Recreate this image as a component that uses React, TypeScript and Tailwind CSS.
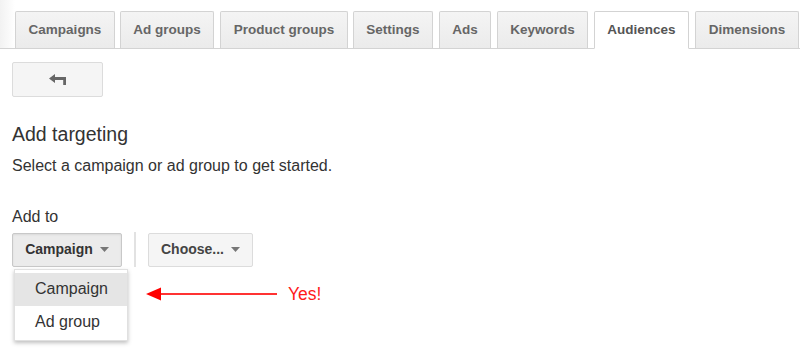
import React from "react";

const tabs = [
  { label: "Campaigns", w: "w-[100px]", ml: "ml-[15px]" },
  { label: "Ad groups", w: "w-[94px]", ml: "ml-[5px]" },
  { label: "Product groups", w: "w-[128px]", ml: "ml-[6px]" },
  { label: "Settings", w: "w-[80px]", ml: "ml-[5px]" },
  { label: "Ads", w: "w-[52px]", ml: "ml-[6px]" },
  { label: "Keywords", w: "w-[91px]", ml: "ml-[6px]" },
  { label: "Audiences", w: "w-[95px]", ml: "ml-[6px]", active: true },
  { label: "Dimensions", w: "w-[104px]", ml: "ml-[6px]" },
];

function Caret() {
  return (
    <svg width="9" height="5" viewBox="0 0 9 5" className="ml-[7px]">
      <path d="M0 0 H9 L4.5 5 Z" fill="#777" />
    </svg>
  );
}

export default function App() {
  return (
    <div
      className="w-[800px] h-[361px] bg-white overflow-hidden text-[#333]"
      style={{ fontFamily: '"Liberation Sans", Arial, sans-serif' }}
    >
      {/* Tab strip */}
      <div className="flex items-end h-[49px] border-b border-[#d3d3d3] bg-[linear-gradient(to_right,#f2f2f2,#ffffff_15px)]">
        {tabs.map((t) => (
          <div
            key={t.label}
            className={`${t.w} ${t.ml} shrink-0 h-[37px] flex items-center justify-center rounded-t-[2px] border border-[#d3d3d3] text-[13.5px] font-bold ${
              t.active
                ? "bg-white text-[#555] border-b-white h-[38px] -mb-px"
                : "bg-[linear-gradient(#f4f4f4,#ebebeb)] text-[#666] border-b-0"
            }`}
          >
            {t.label}
          </div>
        ))}
      </div>

      {/* Back button */}
      <div className="pl-[12px] pt-[13px]">
        <div className="w-[91px] h-[35px] flex items-center justify-center bg-[#f5f5f5] border border-[#dcdcdc] rounded-[2px]">
          <svg width="18" height="12" viewBox="0 0 18 12">
            <path d="M0 4.5 L6 0 V3 H17 V11 H14.2 V6 H6 V9 Z" fill="#666" />
          </svg>
        </div>
      </div>

      <div className="pl-[12px]">
        <div className="mt-[25px] text-[19.5px] leading-[24px] text-[#333]">Add targeting</div>
        <div className="mt-[10px] text-[16px] leading-[20px] text-[#333]">
          Select a campaign or ad group to get started.
        </div>
        <div className="mt-[31px] text-[16px] leading-[20px] text-[#333]">Add to</div>

        <div className="mt-[5px] flex items-center">
          <div className="relative">
            <div className="w-[110px] h-[34px] flex items-center justify-center bg-[#ebebeb] border border-[#c8c8c8] rounded-[2px] text-[14px] font-bold text-[#333] shadow-[inset_0_1px_2px_rgba(0,0,0,0.08)]">
              Campaign
              <Caret />
            </div>
            {/* Dropdown menu */}
            <div className="absolute left-[2px] top-[36px] w-[114px] bg-white border border-[#e0e0e0] shadow-[0_2px_4px_rgba(0,0,0,0.25)] pt-[3px] pb-[1px] z-10">
              <div className="h-[33px] flex items-center pl-[20px] bg-[#e5e5e5] text-[16px] text-[#333]">
                Campaign
              </div>
              <div className="h-[33px] flex items-center pl-[20px] text-[16px] text-[#333]">
                Ad group
              </div>
            </div>
          </div>
          <div className="w-[2px] h-[35px] bg-[#e2e2e2] ml-[12px]" />
          <div className="ml-[12px] w-[105px] h-[34px] flex items-center justify-center bg-[#f5f5f5] border border-[#dcdcdc] rounded-[2px] text-[14px] font-bold text-[#444]">
            Choose...
            <Caret />
          </div>
        </div>
      </div>

      {/* Annotation */}
      <div className="relative">
        <div className="absolute left-[146px] top-[17px] flex items-center">
          <svg width="132" height="14" viewBox="0 0 132 14">
            <path d="M0 7 L15 0.5 V13.5 Z" fill="#ff0000" />
            <rect x="14" y="6.2" width="117" height="1.6" fill="#ff0000" />
          </svg>
          <span className="ml-[10px] text-[17.5px] leading-[20px] text-[#ff1a1a]">Yes!</span>
        </div>
      </div>
    </div>
  );
}
